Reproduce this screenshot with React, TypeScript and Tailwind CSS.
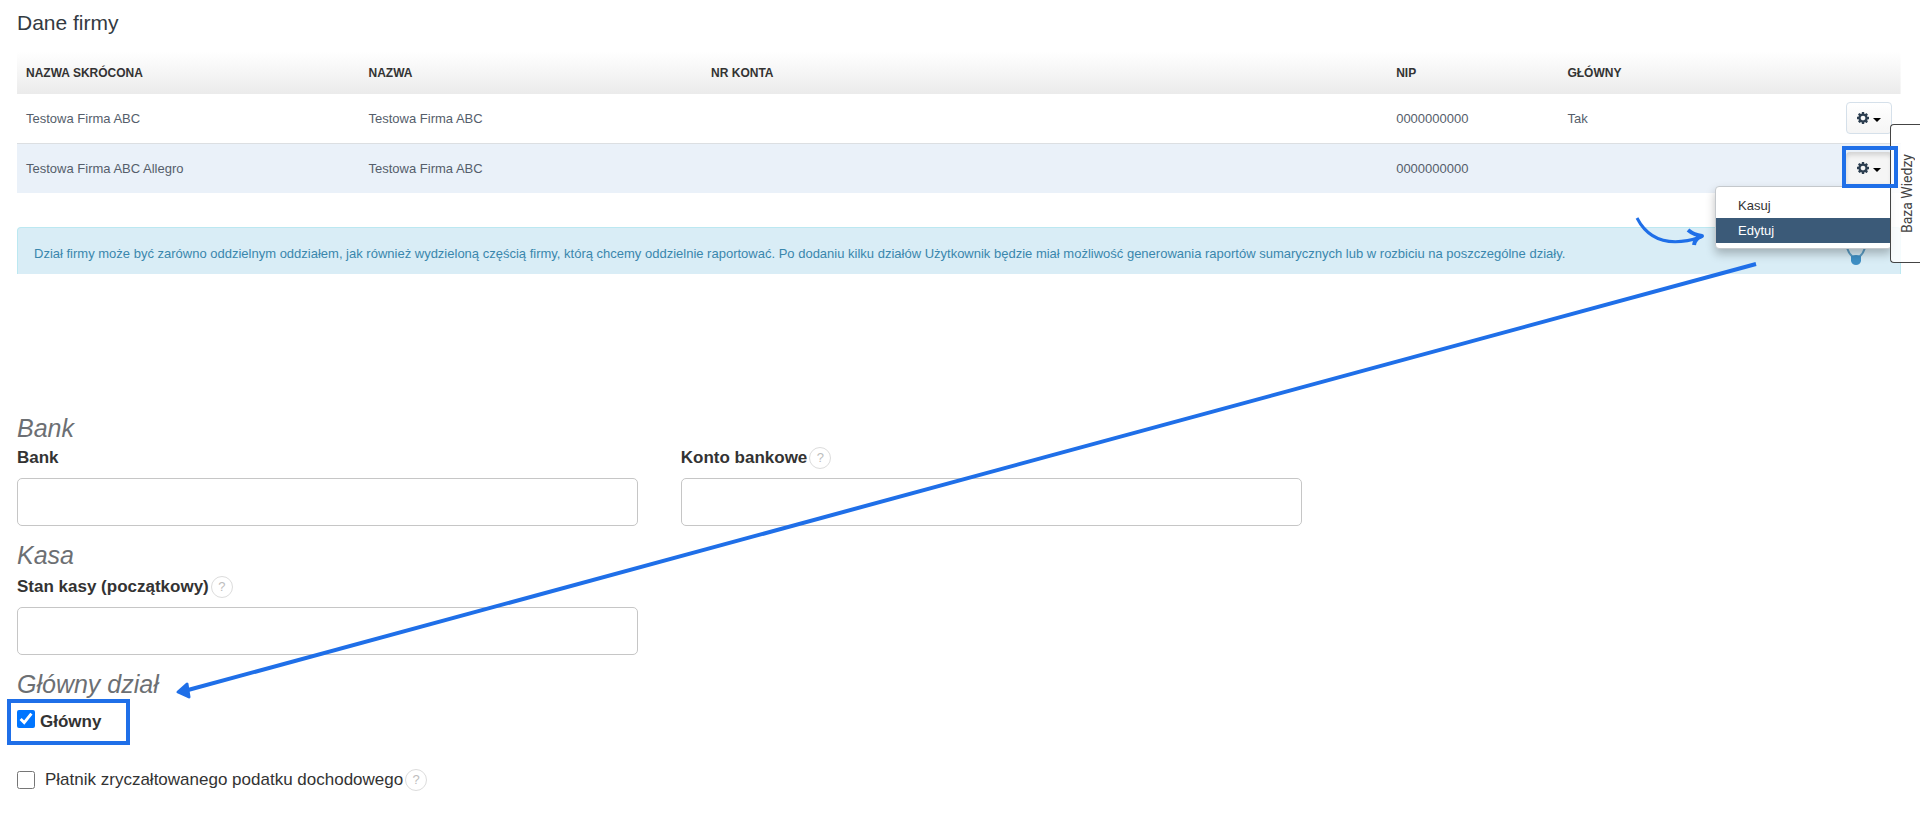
import { useState } from "react";
import type { ReactNode } from "react";

type Firma = { skrot: string; nazwa: string; konto: string; nip: string; glowny: string };

const FIRMY: Firma[] = [
  { skrot: "Testowa Firma ABC", nazwa: "Testowa Firma ABC", konto: "", nip: "0000000000", glowny: "Tak" },
  { skrot: "Testowa Firma ABC Allegro", nazwa: "Testowa Firma ABC", konto: "", nip: "0000000000", glowny: "" },
];

function GearIcon() {
  return (
    <svg viewBox="0 0 1536 1536" className="size-3 text-[#2c3e50]" fill="currentColor" aria-hidden="true">
      <path d="M1068 768q0-124-88-212t-212-88-212 88-88 212 88 212 212 88 212-88 88-212zm468-109v222q0 12-8 23t-20 13l-185 28q-19 54-39 91 35 50 107 138 10 12 10 25t-9 23q-27 37-99 108t-94 71q-12 0-26-9l-138-108q-44 23-91 38-16 136-29 186-7 28-36 28H657q-14 0-24.500-8.500T621 1506l-28-184q-49-16-90-37l-141 107q-10 9-25 9-14 0-25-11-126-114-165-168-7-10-7-23 0-12 8-23 15-21 51-66.500t54-70.500q-27-50-41-99L29 913q-13-2-21-12.500T0 877V655q0-12 8-23t19-13l186-28q14-46 39-92-40-57-107-138-10-12-10-24 0-10 9-23 26-36 98.500-107.500T337 135q13 0 26 10l138 107q44-23 91-38 16-136 29-186 7-28 36-28h222q14 0 24.500 8.500T915 30l28 184q49 16 90 37l142-107q9-9 24-9 13 0 25 10 129 119 165 170 7 8 7 22 0 12-8 23-15 21-51 66.500t-54 70.500q26 50 41 98l183 28q13 2 21 12.500t8 23.500z" />
    </svg>
  );
}

function MenuButton({ active, onClick }: { active: boolean; onClick: () => void }) {
  return (
    <button
      type="button"
      aria-label="Opcje"
      aria-expanded={active}
      onClick={onClick}
      className={
        active
          ? "flex h-8 w-[46px] items-center justify-center gap-1 rounded bg-[#f5f5f5] shadow-[inset_0_3px_5px_rgba(0,0,0,0.15)]"
          : "flex h-8 w-[46px] items-center justify-center gap-1 rounded border border-[#d5e0ea] bg-gradient-to-b from-white to-[#f5f5f5]"
      }
    >
      <GearIcon />
      <span className="mt-1 border-x-4 border-t-4 border-x-transparent border-t-black" />
    </button>
  );
}

function Help() {
  return (
    <button
      type="button"
      aria-label="Pomoc"
      className="flex size-[22px] items-center justify-center rounded-full border border-[#dcdcdc] text-[13px] text-[#bdbdbd]"
    >
      ?
    </button>
  );
}

function Field({ id, label, help }: { id: string; label: string; help?: boolean }) {
  return (
    <div className="min-w-0">
      <div className="flex h-[22px] items-center gap-[2px]">
        <label htmlFor={id} className="text-[17px] leading-[22px] font-bold">
          {label}
        </label>
        {help && <Help />}
      </div>
      <input
        id={id}
        type="text"
        className="mt-[9px] block h-12 w-full rounded-[5px] border-[1px] border-[#c6c6c6] bg-white px-3 text-[17px]"
      />
    </div>
  );
}

function SectionTitle({ children }: { children: ReactNode }) {
  return <h2 className="text-[25px] leading-[29px] text-[#6c6f73] italic">{children}</h2>;
}

export default function App() {
  const [menu, setMenu] = useState<number | null>(1);
  const [glowny, setGlowny] = useState(true);
  const [platnik, setPlatnik] = useState(false);

  const head = "px-[9px] text-left text-[12px] font-bold";
  const cell = "px-[9px] text-[13px]";

  return (
    <div className="relative overflow-hidden bg-white pb-5 font-['Liberation_Sans',Arial,sans-serif] text-[#333]">
      <div className="pr-[19px] pl-[17px]">
        <h1 className="pt-[9px] text-[21px] leading-7 text-[#333a42]">Dane firmy</h1>

        <table className="mt-[15px] w-full table-fixed border-collapse text-[#555e6b]">
          <colgroup>
            <col className="w-2/11" />
            <col className="w-2/11" />
            <col className="w-4/11" />
            <col className="w-1/11" />
            <col className="w-2/11" />
          </colgroup>
          <thead>
            <tr className="h-[42px] bg-gradient-to-b from-white to-[#ebebeb] text-[#333]">
              <th className={head}>NAZWA SKRÓCONA</th>
              <th className={head}>NAZWA</th>
              <th className={head}>NR KONTA</th>
              <th className={head}>NIP</th>
              <th className={head}>GŁÓWNY</th>
            </tr>
          </thead>
          <tbody>
            {FIRMY.map((f, i) => (
              <tr
                key={f.skrot}
                className="h-[49px] border-b border-[#dcdfe2] last:h-[50px] last:border-0 even:bg-[#eaf1f9]"
              >
                <td className={cell}>{f.skrot}</td>
                <td className={cell}>{f.nazwa}</td>
                <td className={cell}>{f.konto}</td>
                <td className={cell}>{f.nip}</td>
                <td className={cell}>
                  <div className="flex items-center justify-between">
                    {f.glowny}
                    <div className="relative ml-auto">
                      <MenuButton active={menu === i} onClick={() => setMenu(menu === i ? null : i)} />
                      {menu === i && (
                        <>
                          <span className="pointer-events-none absolute -top-[6px] -right-[6px] -left-1 z-30 h-[42px] border-4 border-[#1f6fe8]" />
                          <ul className="absolute top-[34px] right-0 z-10 w-[177px] rounded border border-[#c4c8cc] bg-white pt-[6px] pb-[5px] text-[13px] leading-[25px] shadow-[0_5px_10px_rgba(0,0,0,0.25)]">
                            <li>
                              <button type="button" className="block w-full px-[22px] text-left text-[#333]">
                                Kasuj
                              </button>
                            </li>
                            <li>
                              <button type="button" className="block w-full bg-[#3b5a78] px-[22px] text-left text-white">
                                Edytuj
                              </button>
                            </li>
                          </ul>
                        </>
                      )}
                    </div>
                  </div>
                </td>
              </tr>
            ))}
          </tbody>
        </table>

        <div className="mt-[34px] flex h-[47px] items-center justify-between rounded-t border border-b-0 border-[#bce8f1] bg-[#d9edf6] pr-[34px] pl-4 text-[13px] text-[#3a87ad]">
          <p className="mt-[6px]">
            Dział firmy może być zarówno oddzielnym oddziałem, jak również wydzieloną częścią firmy, którą chcemy
            oddzielnie raportować. Po dodaniu kilku działów Użytkownik będzie miał możliwość generowania raportów
            sumarycznych lub w rozbiciu na poszczególne działy.
          </p>
          <svg viewBox="0 0 20 24" className="mb-2 h-6 w-5 shrink-0 self-end" aria-hidden="true">
            <path d="M1 6q2 6 6 9M19 6q-2 6-6 9" stroke="#5d9fc6" strokeWidth="2" fill="none" />
            <path d="M5 14q5-2 10 0v5q-1 4-5 4t-5-4z" fill="#3f8fc4" />
          </svg>
        </div>
      </div>

      <form className="mt-[140px] pl-[17px]">
        <SectionTitle>Bank</SectionTitle>
        <div className="mt-[4px] grid w-27/40 grid-cols-2 gap-x-[43px]">
          <Field id="bank" label="Bank" />
          <Field id="konto" label="Konto bankowe" help />
        </div>
        <div className="mt-[15px]">
          <SectionTitle>Kasa</SectionTitle>
        </div>
        <div className="mt-[6px] grid w-27/40 grid-cols-2 gap-x-[43px]">
          <Field id="kasa" label="Stan kasy (początkowy)" help />
        </div>
        <div className="mt-[15px]">
          <SectionTitle>Główny dział</SectionTitle>
        </div>
        <div className="-ml-[10px] flex h-[46px] w-[123px] items-center gap-[5px] border-4 border-[#1f6fe8] pl-[6px]">
          <input
            id="glowny"
            type="checkbox"
            checked={glowny}
            onChange={(e) => setGlowny(e.target.checked)}
            className="mb-[6px] size-[18px] accent-[#0075ff]"
          />
          <label htmlFor="glowny" className="text-[17px] leading-[22px] font-bold">
            Główny
          </label>
        </div>
        <div className="mt-6 flex h-[22px] items-center">
          <input
            id="platnik"
            type="checkbox"
            checked={platnik}
            onChange={(e) => setPlatnik(e.target.checked)}
            className="size-[18px]"
          />
          <label htmlFor="platnik" className="mr-[2px] ml-[10px] text-[17px] leading-[22px]">
            Płatnik zryczałtowanego podatku dochodowego
          </label>
          <Help />
        </div>
      </form>

      <button
        type="button"
        className="absolute top-[124px] right-0 z-20 flex h-[139px] w-[30px] items-center justify-center rounded-l border border-r-0 border-[#444] bg-white/85 pl-1 font-[Roboto,sans-serif] text-[14px] text-[#444]"
      >
        <span className="rotate-180 [writing-mode:vertical-rl]">Baza Wiedzy</span>
      </button>

      {/* strzałki instrukcji */}
      <svg
        viewBox="0 0 1920 816"
        className="pointer-events-none absolute inset-x-0 top-0 z-30 w-full"
        fill="none"
        stroke="#1f6fe8"
        aria-hidden="true"
      >
        <path d="M1756 264L188 690" strokeWidth="4" />
        <path d="M178 692l9-8 2 13z" fill="#1f6fe8" strokeWidth="3" strokeLinejoin="round" />
        <path d="M1637 218c12 23 34 29 64 19" strokeWidth="3" />
        <path d="M1688 230q6 5 14 6q-7 2-8 9" strokeWidth="4" strokeLinejoin="round" />
      </svg>
    </div>
  );
}
